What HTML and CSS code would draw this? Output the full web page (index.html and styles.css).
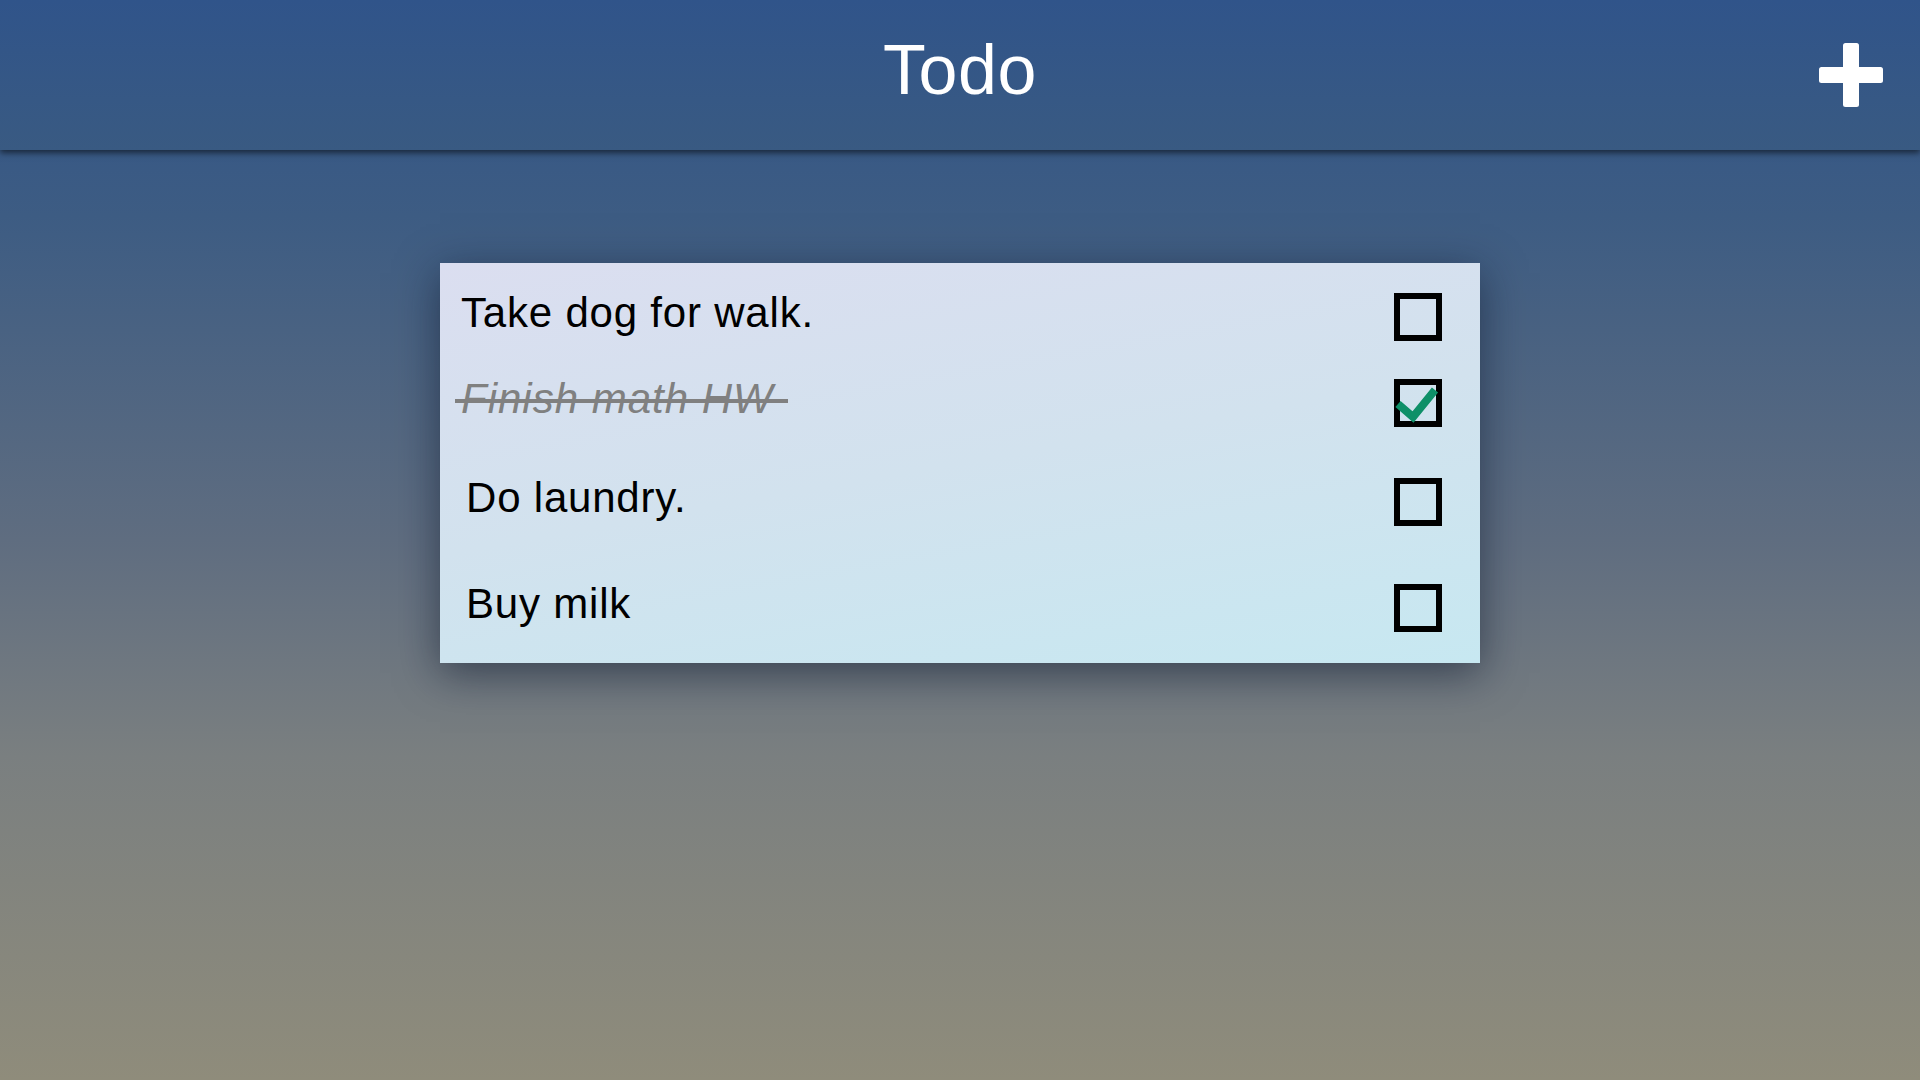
FILE: index.html
```html
<!DOCTYPE html>
<html lang="en">
<head>
<meta charset="utf-8">
<title>Todo</title>
<link rel="stylesheet" href="styles.css">
</head>
<body>
<header class="topbar">
  <h1 class="title">Todo</h1>
  <button class="add-btn" aria-label="Add">
    <svg width="64" height="64" viewBox="0 0 64 64"><rect x="24" y="0" width="16" height="64" rx="2.5" fill="#fff"/><rect x="0" y="24" width="64" height="16" rx="2.5" fill="#fff"/></svg>
  </button>
</header>
<main class="content">
  <section class="card">
    <div class="row row-1 indent-a">
      <span class="label">Take dog for walk.</span>
      <span class="box"></span>
    </div>
    <div class="row row-2 indent-a">
      <span class="label done">Finish math HW</span>
      <span class="box">
        <svg class="check" width="48" height="48" viewBox="0 0 48 48"><polyline points="4,25 19,38 41,11" fill="none" stroke="#0e9068" stroke-width="8" stroke-linejoin="miter"/></svg>
      </span>
    </div>
    <div class="row row-3 indent-b">
      <span class="label">Do laundry.</span>
      <span class="box"></span>
    </div>
    <div class="row row-4 indent-b">
      <span class="label">Buy milk</span>
      <span class="box"></span>
    </div>
  </section>
</main>
</body>
</html>
```
FILE: styles.css
```css
html, body {
  margin: 0;
  padding: 0;
}
body {
  width: 1920px;
  height: 1080px;
  overflow: hidden;
  font-family: "Liberation Sans", Arial, sans-serif;
  background: linear-gradient(180deg, #2f5389 0%, #3d5c83 20%, #5f6d80 50%, #7a7f80 70%, #8f8c7b 100%);
}
.topbar {
  position: relative;
  height: 150px;
  box-sizing: border-box;
  padding-top: 30px;
  display: flex;
  justify-content: center;
  background: linear-gradient(180deg, #30548a 0%, #395a82 100%);
  box-shadow: 0 3px 6px rgba(0, 0, 0, 0.55);
  z-index: 2;
}
.title {
  margin: 0;
  font-weight: normal;
  font-size: 70px;
  line-height: 80px;
  letter-spacing: 0.5px;
  color: #ffffff;
}
.add-btn {
  position: absolute;
  right: 37px;
  top: 43px;
  width: 64px;
  height: 64px;
  padding: 0;
  border: 0;
  background: none;
}
.add-btn svg {
  display: block;
}
.content {
  padding-top: 113px;
}
.card {
  width: 1040px;
  margin: 0 auto;
  box-sizing: border-box;
  padding: 30px 38px 31px 0;
  background: linear-gradient(170deg, #dbdef0 0%, #d2e2ee 50%, #c7e8f1 100%);
  box-shadow: 0 10px 40px rgba(10, 20, 40, 0.55);
}
.row {
  display: flex;
  align-items: center;
  justify-content: space-between;
  height: 48px;
}
.indent-a { padding-left: 21px; }
.indent-b { padding-left: 26px; }
.row-2 { margin-top: 38px; }
.row-3 { margin-top: 51px; }
.row-4 { margin-top: 58px; }
.label {
  position: relative;
  font-size: 42px;
  line-height: 48px;
  letter-spacing: 0.8px;
  padding-bottom: 8px;
  color: #000;
  white-space: nowrap;
}
.label.done {
  font-style: italic;
  letter-spacing: 1px;
  color: #808080;
}
.label.done::after {
  content: "";
  position: absolute;
  left: -6px;
  right: -14px;
  top: 24px;
  height: 4px;
  background: #808080;
}
.box {
  position: relative;
  width: 48px;
  height: 48px;
  box-sizing: border-box;
  border: 6px solid #000;
  flex: none;
}
.check {
  position: absolute;
  left: -6px;
  top: -6px;
}
```
